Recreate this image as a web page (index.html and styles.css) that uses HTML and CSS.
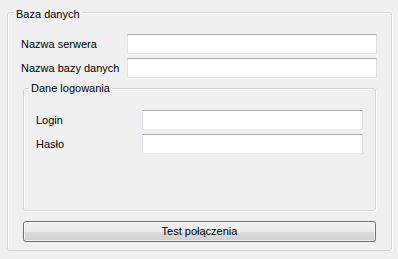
FILE: index.html
```html
<!DOCTYPE html>
<html lang="pl">
<head>
<meta charset="utf-8">
<title>Baza danych</title>
<link rel="stylesheet" href="styles.css">
</head>
<body>
<section class="group outer">
  <div class="group-title outer-title">Baza danych</div>
  <div class="group-body outer-body">
    <div class="form-grid">
      <label class="field-label" for="srv">Nazwa serwera</label>
      <input class="textbox" id="srv" type="text">
      <label class="field-label" for="db">Nazwa bazy danych</label>
      <input class="textbox" id="db" type="text">
    </div>
    <section class="group inner">
      <div class="group-title inner-title">Dane logowania</div>
      <div class="group-body inner-body">
        <div class="form-grid">
          <label class="field-label" for="login">Login</label>
          <input class="textbox" id="login" type="text">
          <label class="field-label" for="pass">Hasło</label>
          <input class="textbox" id="pass" type="password">
        </div>
      </div>
    </section>
    <button class="win-button" type="button">Test połączenia</button>
  </div>
</section>
</body>
</html>
```
FILE: styles.css
```css
html, body {
  margin: 0;
  padding: 0;
  background: #f0f0f0;
}
body {
  font-family: "Liberation Sans", Arial, sans-serif;
  font-size: 11px;
  line-height: 13px;
  color: #000;
  padding: 12px 0 0 7px;
}
.group {
  box-sizing: border-box;
  border: 1px solid #d5d5d5;
  border-radius: 3px;
  box-shadow: inset 1px 1px 0 #ffffff, 1px 1px 0 #ffffff;
}
.outer {
  width: 385px;
}
.group-title {
  display: table;
  padding: 0 2px;
  background: #f0f0f0;
  white-space: nowrap;
}
.outer-title {
  margin: -5px 0 0 6px;
}
.outer-body {
  padding: 13px 14px 8px 13px;
}
.inner {
  margin: 10px 1px 0 2px;
}
.inner-title {
  margin: -7px 0 0 5px;
}
.inner-body {
  padding: 15px 12px 56px 12px;
}
.form-grid {
  display: grid;
  grid-template-columns: 106px 1fr;
  grid-auto-rows: 20px;
  row-gap: 4px;
  align-items: center;
}
.field-label {
  white-space: nowrap;
}
.textbox {
  box-sizing: border-box;
  height: 20px;
  width: 100%;
  margin: 0;
  padding: 0 3px;
  background: #fff;
  border-style: solid;
  border-width: 1px;
  border-color: #abadb3 #dbdfe6 #e3e9ef #e2e3ea;
  border-radius: 0;
  outline: none;
  font: inherit;
}
.win-button {
  display: block;
  box-sizing: border-box;
  width: calc(100% - 3px);
  height: 21px;
  margin: 10px 1px 0 2px;
  padding: 0;
  border: 1px solid #707070;
  border-radius: 3px;
  background: linear-gradient(#f2f2f2 0%, #ebebeb 50%, #dddddd 50%, #cfcfcf 100%);
  box-shadow: inset 0 0 0 1px rgba(255, 255, 255, 0.7);
  font-family: "Liberation Sans", Arial, sans-serif;
  font-size: 11px;
  line-height: 13px;
  color: #000;
}
```
